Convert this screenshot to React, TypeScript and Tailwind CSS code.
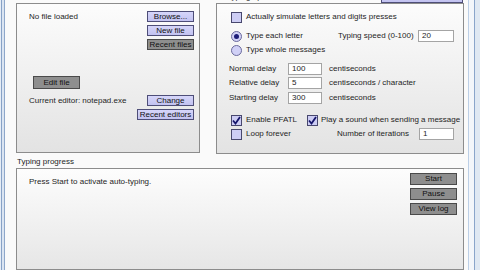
import React from "react";

const Btn = ({ label, gray, className = "" }: { label: string; gray?: boolean; className?: string }) => (
  <div
    className={`flex items-center justify-center border text-[8px] leading-[8px] text-[#111] ${
      gray ? "bg-[#8e8e8e] border-[#4a4a4a]" : "bg-gradient-to-b from-[#d6d6fa] to-[#c2c2f0] border-[#4e4e78]"
    } ${className}`}
  >
    {label}
  </div>
);

const Check = ({ checked }: { checked?: boolean }) => (
  <div className="w-[11px] h-[11px] shrink-0 border border-[#48486e] bg-[#cdcdf4] flex items-center justify-center">
    {checked && (
      <svg width="9" height="9" viewBox="0 0 9 9">
        <path d="M1 4.5 L3.5 7.5 L8 1" fill="none" stroke="#15156a" strokeWidth="1.8" />
      </svg>
    )}
  </div>
);

const Radio = ({ on }: { on?: boolean }) => (
  <div className="w-[11px] h-[11px] shrink-0 rounded-full border border-[#6a6a9c] bg-[#d0d0f6] flex items-center justify-center">
    {on && <div className="w-[5px] h-[5px] rounded-full bg-[#1c1c78]" />}
  </div>
);

const Field = ({ value, className = "" }: { value: string; className?: string }) => (
  <div className={`h-[12px] border border-[#a4a4a4] bg-white pl-[3px] flex items-center text-[8px] leading-[8px] ${className}`}>
    {value}
  </div>
);

export default function App() {
  return (
    <div className="w-[480px] h-[270px] overflow-hidden flex bg-[#fafafa] font-['Liberation_Sans',Arial,sans-serif] text-[8px] leading-[12px] text-[#1e1e1e]">
      {/* left window frame */}
      <div className="flex h-full shrink-0">
        <div className="w-[1px] bg-[#e6edf6]" />
        <div className="w-[1px] bg-[#88a2c6]" />
        <div className="w-[2px] bg-[#dbe5f2]" />
        <div className="w-[1px] bg-[#8ea7ca]" />
      </div>

      {/* content */}
      <div className="flex flex-col w-[463px] pl-[11px] pr-[4px] shrink-0">
        {/* cut-off header row */}
        <div className="flex items-end h-[12px] -mt-[9px]">
          <div className="w-[211px] shrink-0" />
          <div className="leading-[12px] text-[#333]">Typing options</div>
          <Btn label="" className="ml-auto mr-[1px] w-[82px] h-[12px]" />
        </div>

        {/* top panels */}
        <div className="flex gap-[16px]">
          {/* left panel */}
          <div className="w-[184px] h-[150px] border border-[#8c8c8c] bg-gradient-to-b from-[#fcfcfc] to-[#e3e3e3] flex flex-col pt-[7px] pl-[12px] pr-[5px]">
            <div className="flex items-center justify-between h-[11px]">
              <span>No file loaded</span>
              <Btn label="Browse..." className="w-[47px] h-[11px]" />
            </div>
            <Btn label="New file" className="self-end mt-[3px] w-[47px] h-[11px]" />
            <Btn label="Recent files" gray className="self-end mt-[3px] w-[47px] h-[11px]" />
            <Btn label="Edit file" gray className="ml-[4px] mt-[26px] w-[47px] h-[13px]" />
            <div className="flex items-center justify-between h-[11px] mt-[6px]">
              <span>Current editor: notepad.exe</span>
              <Btn label="Change" className="w-[47px] h-[11px]" />
            </div>
            <Btn label="Recent editors" className="self-end mt-[3px] w-[57px] h-[11px]" />
          </div>

          {/* right panel */}
          <div className="flex-1 h-[151px] border border-[#8c8c8c] bg-gradient-to-b from-[#fcfcfc] to-[#e3e3e3] flex flex-col pt-[7px] pl-[12px]">
            <div className="flex items-center h-[12px] pl-[2px] gap-[4px]">
              <Check />
              <span>Actually simulate letters and digits presses</span>
            </div>

            <div className="flex items-center h-[12px] mt-[7px]">
              <div className="w-[109px] flex items-center gap-[4px] pl-[2px]">
                <Radio on />
                <span>Type each letter</span>
              </div>
              <div className="w-[80px]">Typing speed (0-100)</div>
              <Field value="20" className="w-[36px]" />
            </div>
            <div className="flex items-center h-[12px] mt-[2px] pl-[2px] gap-[4px]">
              <Radio />
              <span>Type whole messages</span>
            </div>

            <div className="flex items-center h-[12px] mt-[7px]">
              <div className="w-[59px]">Normal delay</div>
              <Field value="100" className="w-[34px]" />
              <div className="ml-[7px]">centiseconds</div>
            </div>
            <div className="flex items-center h-[12px] mt-[2px]">
              <div className="w-[59px]">Relative delay</div>
              <Field value="5" className="w-[34px]" />
              <div className="ml-[7px]">centiseconds / character</div>
            </div>
            <div className="flex items-center h-[12px] mt-[3px]">
              <div className="w-[59px]">Starting delay</div>
              <Field value="300" className="w-[34px]" />
              <div className="ml-[7px]">centiseconds</div>
            </div>

            <div className="flex items-center h-[12px] mt-[10px]">
              <div className="w-[78px] flex items-center gap-[4px] pl-[2px]">
                <Check checked />
                <span>Enable PFATL</span>
              </div>
              <div className="flex items-center gap-[3px]">
                <Check checked />
                <span className="whitespace-nowrap">Play a sound when sending a message</span>
              </div>
            </div>
            <div className="flex items-center h-[12px] mt-[2px]">
              <div className="w-[108px] flex items-center gap-[4px] pl-[2px]">
                <Check />
                <span>Loop forever</span>
              </div>
              <div className="w-[82px]">Number of iterations</div>
              <Field value="1" className="w-[35px]" />
            </div>
          </div>
        </div>

        {/* typing progress */}
        <div className="mt-[2px] ml-[1px] h-[12px] leading-[12px]">Typing progress</div>
        <div className="h-[110px] border border-[#8c8c8c] bg-gradient-to-b from-[#fdfdfd] to-[#e6e6e6] flex justify-between pt-[4px] pl-[12px] pr-[6px]">
          <div className="mt-[3px] h-[12px] leading-[12px]">Press Start to activate auto-typing.</div>
          <div className="flex flex-col gap-[3px]">
            <Btn label="Start" gray className="w-[47px] h-[12px]" />
            <Btn label="Pause" gray className="w-[47px] h-[12px]" />
            <Btn label="View log" gray className="w-[47px] h-[12px]" />
          </div>
        </div>
      </div>

      {/* right window frame */}
      <div className="flex h-full flex-1">
        <div className="w-[1px] bg-[#bccfe6]" />
        <div className="w-[5px] bg-[#f3f6fb]" />
        <div className="w-[1px] bg-[#8aa5cb]" />
        <div className="flex-1 bg-[#dfe8f3]" />
      </div>
    </div>
  );
}
